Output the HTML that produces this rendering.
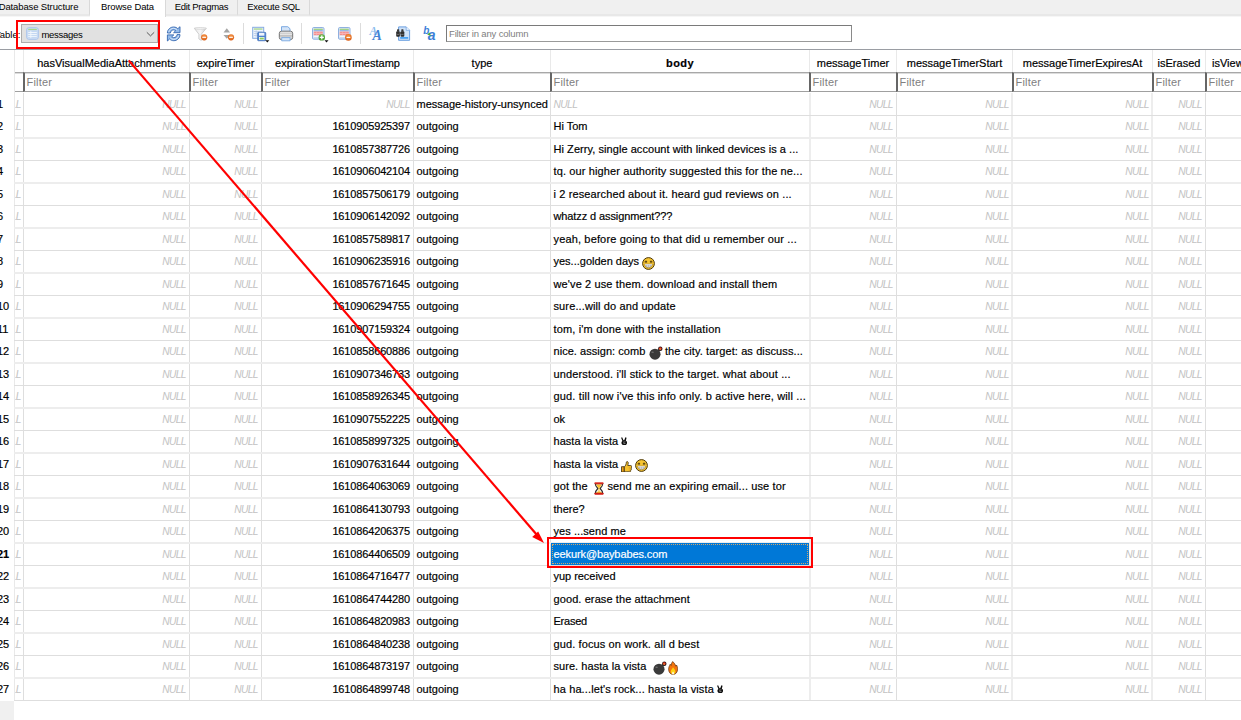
<!DOCTYPE html><html><head><meta charset="utf-8"><title>DB Browser - Browse Data</title><style>

html,body{margin:0;padding:0}
body{width:1241px;height:720px;overflow:hidden;background:#fff;position:relative;font-family:"Liberation Sans","DejaVu Sans",sans-serif;font-size:11px;color:#000;}
div,span{box-sizing:border-box}
.abs{position:absolute}
.tabbar{position:absolute;left:0;top:0;width:1241px;height:16px;background:#f0f0f0;border-bottom:2px solid #e8e8e8;box-shadow:0 1px 0 #f6f6f6}
.tab{position:absolute;top:0;height:16px;line-height:14px;font-size:9.5px;letter-spacing:-0.3px;text-align:center;border-right:1px solid #d9d9d9;border-bottom:2px solid #e8e8e8;background:#f0f0f0;white-space:nowrap;overflow:hidden}
.tab.sel{background:#fff;border-bottom:0;height:17px}
.vl{position:absolute;width:1px;background:#dedede}
.hl{position:absolute;height:1px;background:#dedede}
.hdr{position:absolute;top:50px;height:22px;line-height:26px;text-align:center;white-space:nowrap;overflow:hidden}
.flt{position:absolute;top:72px;height:20px;border-top:1px solid #a8a8a8;border-bottom:1px solid #a0a0a0;border-left:2px solid #666;color:#808080;line-height:19px;padding-left:1.500px;letter-spacing:0.200px;box-shadow:inset 0 1px 0 #dcdcdc;white-space:nowrap;overflow:hidden;background:#fff}
.c{position:absolute;white-space:nowrap;overflow:hidden;height:22px;line-height:22px;-webkit-text-stroke:0.18px currentColor}
.hdr,.rh{-webkit-text-stroke:0.18px currentColor}
.null{-webkit-text-stroke:0 transparent}
.r{text-align:right;padding-right:3px}
.l{text-align:left;padding-left:2.5px}
.num{letter-spacing:-0.15px}
.null{color:#c2c2c2;font-style:italic;font-size:10.2px;letter-spacing:-0.55px}
.rh{position:absolute;left:-3px;width:17px;text-align:left;white-space:nowrap;height:22px;line-height:22px;overflow:hidden}
.tb{font-size:9.5px;letter-spacing:-0.3px}
.em{display:inline-block;vertical-align:baseline}
.vic{font-family:"DejaVu Sans",sans-serif;font-size:10px;margin-left:3px;line-height:1;font-weight:bold}

</style></head><body>
<div class="tabbar"></div>
<div class="tab" style="left:-12px;width:102px;letter-spacing:-0.12px">Database Structure</div>
<div class="tab sel" style="left:90px;width:76px;letter-spacing:-0.12px">Browse Data</div>
<div class="tab" style="left:166px;width:72px;letter-spacing:-0.3px">Edit Pragmas</div>
<div class="tab" style="left:238px;width:72px;letter-spacing:-0.3px">Execute SQL</div>
<div class="abs tb" style="left:-11.2px;top:28px;width:31.5px;height:14px;line-height:14px;white-space:nowrap;text-align:right;letter-spacing:0">Table:</div>
<div class="abs" style="left:21px;top:24px;width:137px;height:19px;background:#e1e1e1;border:1px solid #adadad"></div>
<svg class="abs" style="left:26px;top:27px" width="13" height="13" viewBox="0 0 13 13"><rect x="0.700" y="0.700" width="11.600" height="11.600" rx="2" fill="#cfdff5" stroke="#a9c4ec" stroke-width="1"/><rect x="2.200" y="1.800" width="8.600" height="1.300" fill="#a6d68a"/><rect x="2.200" y="3.800" width="8.600" height="7" fill="#c3d7f2"/><path d="M2.200 5.500h8.600M2.200 7.500h8.600M2.200 9.400h8.600M4.800 3.800v7" stroke="#f4f8fd" stroke-width="0.900"/></svg>
<div class="abs tb" style="left:41.5px;top:28px;height:14px;line-height:14px">messages</div>
<svg class="abs" style="left:146px;top:31px" width="9" height="6" viewBox="0 0 9 6"><path d="M0.800 1.300l3.700 3.600 3.700-3.600" fill="none" stroke="#5a5a5a" stroke-width="1"/></svg>
<svg width="0" height="0" style="position:absolute"><defs><radialGradient id="gor" cx="0.5" cy="0.35" r="0.7"><stop offset="0" stop-color="#f79a4c"/><stop offset="1" stop-color="#d9580f"/></radialGradient><radialGradient id="ggr" cx="0.5" cy="0.35" r="0.7"><stop offset="0" stop-color="#7cc65e"/><stop offset="1" stop-color="#3f9628"/></radialGradient><linearGradient id="gpr" x1="0" y1="0" x2="0" y2="1"><stop offset="0" stop-color="#f4f4f4"/><stop offset="0.45" stop-color="#b9b9b9"/><stop offset="1" stop-color="#ececec"/></linearGradient><linearGradient id="gfn" x1="0" y1="0" x2="1" y2="0"><stop offset="0" stop-color="#e9e9e9"/><stop offset="0.5" stop-color="#f6f6f6"/><stop offset="1" stop-color="#cfcfcf"/></linearGradient></defs></svg>
<svg class="abs" style="left:166px;top:26px" width="16" height="16" viewBox="0 0 16 16"><path d="M1.400 7C1.400 3.400 4.400 1 7.600 1 9.400 1 10.800 1.700 11.800 2.700L14 0.700V6.700H7.600L9.700 4.700C9.100 4.200 8.500 3.900 7.600 3.900 5.800 3.900 4.600 5.200 4.400 7Z" fill="#94bbea" stroke="#3568b0" stroke-width="0.900" stroke-linejoin="round"/><path d="M14 8.600C14 12.200 11 14.700 7.800 14.700 6 14.700 4.600 14 3.600 13L1.400 15V8.900H7.800L5.700 10.900C6.300 11.400 6.900 11.700 7.800 11.700 9.600 11.700 10.800 10.400 11 8.600Z" fill="#94bbea" stroke="#3568b0" stroke-width="0.900" stroke-linejoin="round"/><path d="M2.700 6.200C3.100 3.800 5.200 2.300 7.600 2.300 9 2.300 10.200 2.900 11 3.700M12.700 9.400C12.300 11.800 10.200 13.400 7.800 13.400 6.400 13.400 5.200 12.800 4.400 12" fill="none" stroke="#e2eefb" stroke-width="0.800"/></svg>
<svg class="abs" style="left:193px;top:26px" width="16" height="16" viewBox="0 0 16 16"><path d="M1.300 2.300h12L8.300 8.200v6.200L5.900 13V8.200z" fill="url(#gfn)" stroke="#bdbdbd" stroke-width="0.700"/><ellipse cx="7.300" cy="2.400" rx="5.900" ry="0.900" fill="#f4f4f4" stroke="#c4c4c4" stroke-width="0.500"/><circle cx="11.2" cy="11.3" r="3.1" fill="url(#gor)"/><rect x="9.299999999999999" y="10.75" width="3.8" height="1.1" fill="#fff"/></svg>
<svg class="abs" style="left:222px;top:26px" width="14" height="16" viewBox="0 0 14 16"><path d="M4.800 2.300L8.100 6.600H1.500z" fill="#a4a4a4"/><path d="M4.800 12.700L8.100 9H1.500z" fill="#a4a4a4"/><circle cx="9.0" cy="11.3" r="3.1" fill="url(#gor)"/><rect x="7.1" y="10.75" width="3.8" height="1.1" fill="#fff"/></svg>
<svg class="abs" style="left:251px;top:26px" width="19" height="17" viewBox="0 0 19 17"><rect x="1.700" y="1.300" width="11" height="11" fill="#eef4fc" stroke="#86abe0" stroke-width="1"/><rect x="2.900" y="2.400" width="8.600" height="1.300" fill="#a6d68a"/><path d="M2.900 5.500h8.600M2.900 7.500h8.600M2.900 9.500h8.600M5.200 4.400v7" stroke="#b9cdea" stroke-width="0.800"/><rect x="6.600" y="6.300" width="8.200" height="8.500" rx="0.800" fill="#4f82d0" stroke="#3666b4" stroke-width="0.600"/><rect x="8" y="6.800" width="5.400" height="2.900" fill="#f0f4fb"/><rect x="8" y="11" width="5.400" height="3" fill="#fff"/><rect x="8.600" y="11.600" width="4.200" height="1.900" fill="#8ccc62"/><path d="M14.300 14.300h4l-2 2.300z" fill="#111"/></svg>
<svg class="abs" style="left:278px;top:26px" width="16" height="16" viewBox="0 0 16 16"><path d="M3.500 0.700h6.300l2.200 2V6.500H3.500z" fill="#d3e4f8" stroke="#6fa2de" stroke-width="0.900" stroke-linejoin="round"/><rect x="1.300" y="5.200" width="13.400" height="8.400" rx="2.200" fill="url(#gpr)" stroke="#5c5c5c" stroke-width="0.800"/><path d="M2 8.600h12" stroke="#fff" stroke-width="0.800" opacity="0.800"/><path d="M3.700 11.600h8.400v3.200H3.700z" fill="#d3e4f8" stroke="#6fa2de" stroke-width="0.800"/></svg>
<svg class="abs" style="left:311.7px;top:27px" width="19" height="17" viewBox="0 0 19 17"><rect x="0.500" y="0.500" width="11.500" height="11.700" rx="1.200" fill="#dbe7f7" stroke="#8fb0e0" stroke-width="1"/><rect x="1.700" y="1.700" width="9.100" height="1.200" fill="#9ad07a"/><rect x="1.700" y="3.300" width="9.100" height="0.900" fill="#7ea6e0"/><rect x="1.700" y="4.600" width="9.100" height="3.600" fill="#f58e8e"/><rect x="1.700" y="8.900" width="9.100" height="2.300" fill="#f4f7fc"/><path d="M1.700 6.400h9.100" stroke="#fbd0d0" stroke-width="0.600"/><path d="M1.700 10.900h9.100" stroke="#7ea6e0" stroke-width="0.600"/><path d="M4.500 4.600v3.600M7.800 4.600v3.600" stroke="#f9b8b8" stroke-width="0.500"/><circle cx="9.8" cy="10.4" r="3.2" fill="url(#ggr)"/><rect x="7.800000000000001" y="9.8" width="4" height="1.2" fill="#fff"/><rect x="9.200000000000001" y="8.4" width="1.2" height="4" fill="#fff"/><path d="M12.500 13.200h4l-2 2.400z" fill="#111"/></svg>
<svg class="abs" style="left:338.3px;top:27px" width="16" height="16" viewBox="0 0 16 16"><rect x="0.500" y="0.500" width="11.500" height="11.700" rx="1.200" fill="#dbe7f7" stroke="#8fb0e0" stroke-width="1"/><rect x="1.700" y="1.700" width="9.100" height="1.200" fill="#9ad07a"/><rect x="1.700" y="3.300" width="9.100" height="0.900" fill="#7ea6e0"/><rect x="1.700" y="4.600" width="9.100" height="3.600" fill="#f58e8e"/><rect x="1.700" y="8.900" width="9.100" height="2.300" fill="#f4f7fc"/><path d="M1.700 6.400h9.100" stroke="#fbd0d0" stroke-width="0.600"/><path d="M1.700 10.900h9.100" stroke="#7ea6e0" stroke-width="0.600"/><path d="M4.500 4.600v3.600M7.800 4.600v3.600" stroke="#f9b8b8" stroke-width="0.500"/><circle cx="10.4" cy="10.4" r="3.3" fill="url(#gor)"/><rect x="8.5" y="9.85" width="3.8" height="1.1" fill="#fff"/></svg>
<svg class="abs" style="left:368px;top:26px" width="18" height="16" viewBox="0 0 18 16"><text x="1.600" y="9" font-family="Liberation Serif,serif" font-style="italic" font-weight="bold" font-size="11.500" fill="#8cbcee">A</text><text x="4.600" y="13.700" font-family="Liberation Serif,serif" font-style="italic" font-weight="bold" font-size="14" fill="#4584d6">A</text></svg>
<svg class="abs" style="left:395px;top:26px" width="17" height="16" viewBox="0 0 17 16"><path d="M3.600 0.900h7.600l3.400 3.400V14.300H3.600z" fill="#cfe2f8" stroke="#6a9fe0" stroke-width="1" stroke-linejoin="round"/><path d="M11.200 0.900v3.400h3.400" fill="#f4f9ff" stroke="#6a9fe0" stroke-width="0.700"/><rect x="5.200" y="11" width="8" height="1.800" fill="#4aa2f2"/><rect x="1.200" y="5.200" width="3.700" height="5.600" rx="1" fill="#2e2e2e"/><rect x="5.600" y="5.200" width="3.700" height="5.600" rx="1" fill="#2e2e2e"/><rect x="2" y="3.200" width="2.200" height="2.500" rx="0.600" fill="#3a3a3a"/><rect x="6.300" y="3.200" width="2.200" height="2.500" rx="0.600" fill="#3a3a3a"/><rect x="4.400" y="6" width="1.600" height="2.200" fill="#555"/><path d="M1.800 8.400h2.400M6.200 8.400h2.400" stroke="#9a9a9a" stroke-width="0.600"/></svg>
<svg class="abs" style="left:422px;top:25px" width="17" height="17" viewBox="0 0 17 17"><text x="1.200" y="8.800" font-family="Liberation Sans,sans-serif" font-style="italic" font-weight="bold" font-size="10" fill="#3d7fd8">b</text><text x="5.800" y="15.400" font-family="Liberation Sans,sans-serif" font-style="italic" font-weight="bold" font-size="14" fill="#3d7fd8">a</text><path d="M5.200 9.600l3.800 1.400-1.400-3.400z" fill="#4aa838"/></svg>
<div class="abs" style="left:243px;top:23px;width:1px;height:21px;background:#dcdcdc"></div>
<div class="abs" style="left:301px;top:23px;width:1px;height:21px;background:#dcdcdc"></div>
<div class="abs" style="left:360px;top:23px;width:1px;height:21px;background:#dcdcdc"></div>
<div class="abs" style="left:446px;top:25px;width:406px;height:17px;border:1px solid #7a7a7a;border-bottom-color:#9a9a9a;border-right-color:#8a8a8a;background:#fff;color:#808080;line-height:16px;padding-left:2px;font-size:9.5px;letter-spacing:-0.15px">Filter in any column</div>
<div class="abs" style="left:0;top:49px;width:1241px;height:1px;background:#9a9da3"></div>
<div class="hdr" style="left:24px;width:165px;">hasVisualMediaAttachments</div>
<div class="hdr" style="left:190px;width:71px;">expireTimer</div>
<div class="hdr" style="left:262px;width:151px;">expirationStartTimestamp</div>
<div class="hdr" style="left:414px;width:136px;">type</div>
<div class="hdr" style="left:551px;width:258px;font-weight:bold;letter-spacing:0.4px;">body</div>
<div class="hdr" style="left:810px;width:86px;">messageTimer</div>
<div class="hdr" style="left:897px;width:115px;">messageTimerStart</div>
<div class="hdr" style="left:1013px;width:139px;">messageTimerExpiresAt</div>
<div class="hdr" style="left:1153px;width:52px;">isErased</div>
<div class="hdr" style="left:1206px;width:94px;text-align:left;padding-left:6px;">isViewOnce</div>
<div class="flt" style="left:14px;width:9px;border-left:0;padding:0"></div>
<div class="flt" style="left:23px;width:166px">Filter</div>
<div class="flt" style="left:189px;width:72px">Filter</div>
<div class="flt" style="left:261px;width:152px">Filter</div>
<div class="flt" style="left:413px;width:137px">Filter</div>
<div class="flt" style="left:550px;width:259px">Filter</div>
<div class="flt" style="left:809px;width:87px">Filter</div>
<div class="flt" style="left:896px;width:116px">Filter</div>
<div class="flt" style="left:1012px;width:140px">Filter</div>
<div class="flt" style="left:1152px;width:53px">Filter</div>
<div class="flt" style="left:1205px;width:95px">Filter</div>
<div class="vl" style="left:14px;top:50px;height:650px;background:#e9e9e9"></div>
<div class="vl" style="left:23px;top:50px;height:22px;background:#e9e9e9"></div>
<div class="vl" style="left:23px;top:93px;height:608px"></div>
<div class="vl" style="left:189px;top:50px;height:22px;background:#e9e9e9"></div>
<div class="vl" style="left:189px;top:93px;height:608px"></div>
<div class="vl" style="left:261px;top:50px;height:22px;background:#e9e9e9"></div>
<div class="vl" style="left:261px;top:93px;height:608px"></div>
<div class="vl" style="left:413px;top:50px;height:22px;background:#e9e9e9"></div>
<div class="vl" style="left:413px;top:93px;height:608px"></div>
<div class="vl" style="left:550px;top:50px;height:22px;background:#e9e9e9"></div>
<div class="vl" style="left:550px;top:93px;height:608px"></div>
<div class="vl" style="left:809px;top:50px;height:22px;background:#e9e9e9"></div>
<div class="vl" style="left:809px;top:93px;height:608px;width:2px;background:#ededed"></div>
<div class="vl" style="left:896px;top:50px;height:22px;background:#e9e9e9"></div>
<div class="vl" style="left:896px;top:93px;height:608px"></div>
<div class="vl" style="left:1012px;top:50px;height:22px;background:#e9e9e9"></div>
<div class="vl" style="left:1011px;top:93px;height:608px;width:2px;background:#ededed"></div>
<div class="vl" style="left:1152px;top:50px;height:22px;background:#e9e9e9"></div>
<div class="vl" style="left:1151px;top:93px;height:608px;width:2px;background:#ededed"></div>
<div class="vl" style="left:1205px;top:50px;height:22px;background:#e9e9e9"></div>
<div class="vl" style="left:1205px;top:93px;height:608px"></div>
<div class="hl" style="left:14px;top:115px;width:1227px"></div>
<div class="hl" style="left:14px;top:137px;width:1227px;height:2px;background:#ededed"></div>
<div class="hl" style="left:14px;top:160px;width:1227px"></div>
<div class="hl" style="left:14px;top:182px;width:1227px;height:2px;background:#ededed"></div>
<div class="hl" style="left:14px;top:205px;width:1227px"></div>
<div class="hl" style="left:14px;top:227px;width:1227px;height:2px;background:#ededed"></div>
<div class="hl" style="left:14px;top:250px;width:1227px"></div>
<div class="hl" style="left:14px;top:272px;width:1227px;height:2px;background:#ededed"></div>
<div class="hl" style="left:14px;top:295px;width:1227px"></div>
<div class="hl" style="left:14px;top:317px;width:1227px;height:2px;background:#ededed"></div>
<div class="hl" style="left:14px;top:340px;width:1227px"></div>
<div class="hl" style="left:14px;top:362px;width:1227px;height:2px;background:#ededed"></div>
<div class="hl" style="left:14px;top:385px;width:1227px"></div>
<div class="hl" style="left:14px;top:407px;width:1227px;height:2px;background:#ededed"></div>
<div class="hl" style="left:14px;top:430px;width:1227px"></div>
<div class="hl" style="left:14px;top:452px;width:1227px;height:2px;background:#ededed"></div>
<div class="hl" style="left:14px;top:475px;width:1227px"></div>
<div class="hl" style="left:14px;top:497px;width:1227px;height:2px;background:#ededed"></div>
<div class="hl" style="left:14px;top:520px;width:1227px"></div>
<div class="hl" style="left:14px;top:542px;width:1227px;height:2px;background:#ededed"></div>
<div class="hl" style="left:14px;top:565px;width:1227px"></div>
<div class="hl" style="left:14px;top:587px;width:1227px;height:2px;background:#ededed"></div>
<div class="hl" style="left:14px;top:610px;width:1227px"></div>
<div class="hl" style="left:14px;top:632px;width:1227px;height:2px;background:#ededed"></div>
<div class="hl" style="left:14px;top:655px;width:1227px"></div>
<div class="hl" style="left:14px;top:677px;width:1227px;height:2px;background:#ededed"></div>
<div class="hl" style="left:14px;top:700px;width:1227px"></div>
<div class="abs" style="left:0;top:701px;width:14px;height:19px;background:#f0f0f0"></div>
<div class="rh" style="top:93px;height:22px;line-height:23px;">1</div>
<div class="c null" style="left:15px;top:93px;width:8px;height:22px;line-height:23px;text-align:right;padding-right:2px;direction:rtl"><span style="direction:ltr;unicode-bidi:bidi-override">NULL</span></div>
<div class="c r null" style="left:24px;top:93px;width:165px;height:22px;line-height:23px;">NULL</div>
<div class="c r null" style="left:190px;top:93px;width:71px;height:22px;line-height:23px;">NULL</div>
<div class="c r null" style="left:262px;top:93px;width:151px;height:22px;line-height:23px;">NULL</div>
<div class="c l" style="left:414px;top:93px;width:136px;height:22px;line-height:23px;">message-history-unsynced</div>
<div class="c l null" style="left:551px;top:93px;width:258px;height:22px;line-height:23px;">NULL</div>
<div class="c r null" style="left:810px;top:93px;width:86px;height:22px;line-height:23px;">NULL</div>
<div class="c r null" style="left:897px;top:93px;width:115px;height:22px;line-height:23px;">NULL</div>
<div class="c r null" style="left:1013px;top:93px;width:139px;height:22px;line-height:23px;">NULL</div>
<div class="c r null" style="left:1153px;top:93px;width:52px;height:22px;line-height:23px;">NULL</div>
<div class="rh" style="top:116px;height:21px;line-height:20px;">2</div>
<div class="c null" style="left:15px;top:116px;width:8px;height:21px;line-height:21px;text-align:right;padding-right:2px;direction:rtl"><span style="direction:ltr;unicode-bidi:bidi-override">NULL</span></div>
<div class="c r null" style="left:24px;top:116px;width:165px;height:21px;line-height:21px;">NULL</div>
<div class="c r null" style="left:190px;top:116px;width:71px;height:21px;line-height:21px;">NULL</div>
<div class="c r num" style="left:262px;top:116px;width:151px;height:21px;line-height:20px;">1610905925397</div>
<div class="c l" style="left:414px;top:116px;width:136px;height:21px;line-height:20px;">outgoing</div>
<div class="c l" style="left:551px;top:116px;width:258px;height:21px;line-height:20px;">Hi Tom</div>
<div class="c r null" style="left:810px;top:116px;width:86px;height:21px;line-height:21px;">NULL</div>
<div class="c r null" style="left:897px;top:116px;width:115px;height:21px;line-height:21px;">NULL</div>
<div class="c r null" style="left:1013px;top:116px;width:139px;height:21px;line-height:21px;">NULL</div>
<div class="c r null" style="left:1153px;top:116px;width:52px;height:21px;line-height:21px;">NULL</div>
<div class="rh" style="top:138px;height:22px;line-height:23px;">3</div>
<div class="c null" style="left:15px;top:138px;width:8px;height:22px;line-height:23px;text-align:right;padding-right:2px;direction:rtl"><span style="direction:ltr;unicode-bidi:bidi-override">NULL</span></div>
<div class="c r null" style="left:24px;top:138px;width:165px;height:22px;line-height:23px;">NULL</div>
<div class="c r null" style="left:190px;top:138px;width:71px;height:22px;line-height:23px;">NULL</div>
<div class="c r num" style="left:262px;top:138px;width:151px;height:22px;line-height:23px;">1610857387726</div>
<div class="c l" style="left:414px;top:138px;width:136px;height:22px;line-height:23px;">outgoing</div>
<div class="c l" style="left:551px;top:138px;width:258px;height:22px;line-height:23px;"><span style="letter-spacing:0.058px">Hi Zerry, single account with linked devices is a ...</span></div>
<div class="c r null" style="left:810px;top:138px;width:86px;height:22px;line-height:23px;">NULL</div>
<div class="c r null" style="left:897px;top:138px;width:115px;height:22px;line-height:23px;">NULL</div>
<div class="c r null" style="left:1013px;top:138px;width:139px;height:22px;line-height:23px;">NULL</div>
<div class="c r null" style="left:1153px;top:138px;width:52px;height:22px;line-height:23px;">NULL</div>
<div class="rh" style="top:161px;height:21px;line-height:20px;">4</div>
<div class="c null" style="left:15px;top:161px;width:8px;height:21px;line-height:21px;text-align:right;padding-right:2px;direction:rtl"><span style="direction:ltr;unicode-bidi:bidi-override">NULL</span></div>
<div class="c r null" style="left:24px;top:161px;width:165px;height:21px;line-height:21px;">NULL</div>
<div class="c r null" style="left:190px;top:161px;width:71px;height:21px;line-height:21px;">NULL</div>
<div class="c r num" style="left:262px;top:161px;width:151px;height:21px;line-height:20px;">1610906042104</div>
<div class="c l" style="left:414px;top:161px;width:136px;height:21px;line-height:20px;">outgoing</div>
<div class="c l" style="left:551px;top:161px;width:258px;height:21px;line-height:20px;"><span style="letter-spacing:0.119px">tq. our higher authority suggested this for the ne...</span></div>
<div class="c r null" style="left:810px;top:161px;width:86px;height:21px;line-height:21px;">NULL</div>
<div class="c r null" style="left:897px;top:161px;width:115px;height:21px;line-height:21px;">NULL</div>
<div class="c r null" style="left:1013px;top:161px;width:139px;height:21px;line-height:21px;">NULL</div>
<div class="c r null" style="left:1153px;top:161px;width:52px;height:21px;line-height:21px;">NULL</div>
<div class="rh" style="top:183px;height:22px;line-height:23px;">5</div>
<div class="c null" style="left:15px;top:183px;width:8px;height:22px;line-height:23px;text-align:right;padding-right:2px;direction:rtl"><span style="direction:ltr;unicode-bidi:bidi-override">NULL</span></div>
<div class="c r null" style="left:24px;top:183px;width:165px;height:22px;line-height:23px;">NULL</div>
<div class="c r null" style="left:190px;top:183px;width:71px;height:22px;line-height:23px;">NULL</div>
<div class="c r num" style="left:262px;top:183px;width:151px;height:22px;line-height:23px;">1610857506179</div>
<div class="c l" style="left:414px;top:183px;width:136px;height:22px;line-height:23px;">outgoing</div>
<div class="c l" style="left:551px;top:183px;width:258px;height:22px;line-height:23px;"><span style="letter-spacing:0.120px">i 2 researched about it. heard gud reviews on ...</span></div>
<div class="c r null" style="left:810px;top:183px;width:86px;height:22px;line-height:23px;">NULL</div>
<div class="c r null" style="left:897px;top:183px;width:115px;height:22px;line-height:23px;">NULL</div>
<div class="c r null" style="left:1013px;top:183px;width:139px;height:22px;line-height:23px;">NULL</div>
<div class="c r null" style="left:1153px;top:183px;width:52px;height:22px;line-height:23px;">NULL</div>
<div class="rh" style="top:206px;height:21px;line-height:20px;">6</div>
<div class="c null" style="left:15px;top:206px;width:8px;height:21px;line-height:21px;text-align:right;padding-right:2px;direction:rtl"><span style="direction:ltr;unicode-bidi:bidi-override">NULL</span></div>
<div class="c r null" style="left:24px;top:206px;width:165px;height:21px;line-height:21px;">NULL</div>
<div class="c r null" style="left:190px;top:206px;width:71px;height:21px;line-height:21px;">NULL</div>
<div class="c r num" style="left:262px;top:206px;width:151px;height:21px;line-height:20px;">1610906142092</div>
<div class="c l" style="left:414px;top:206px;width:136px;height:21px;line-height:20px;">outgoing</div>
<div class="c l" style="left:551px;top:206px;width:258px;height:21px;line-height:20px;"><span style="letter-spacing:-0.105px">whatzz d assignment???</span></div>
<div class="c r null" style="left:810px;top:206px;width:86px;height:21px;line-height:21px;">NULL</div>
<div class="c r null" style="left:897px;top:206px;width:115px;height:21px;line-height:21px;">NULL</div>
<div class="c r null" style="left:1013px;top:206px;width:139px;height:21px;line-height:21px;">NULL</div>
<div class="c r null" style="left:1153px;top:206px;width:52px;height:21px;line-height:21px;">NULL</div>
<div class="rh" style="top:228px;height:22px;line-height:23px;">7</div>
<div class="c null" style="left:15px;top:228px;width:8px;height:22px;line-height:23px;text-align:right;padding-right:2px;direction:rtl"><span style="direction:ltr;unicode-bidi:bidi-override">NULL</span></div>
<div class="c r null" style="left:24px;top:228px;width:165px;height:22px;line-height:23px;">NULL</div>
<div class="c r null" style="left:190px;top:228px;width:71px;height:22px;line-height:23px;">NULL</div>
<div class="c r num" style="left:262px;top:228px;width:151px;height:22px;line-height:23px;">1610857589817</div>
<div class="c l" style="left:414px;top:228px;width:136px;height:22px;line-height:23px;">outgoing</div>
<div class="c l" style="left:551px;top:228px;width:258px;height:22px;line-height:23px;"><span style="letter-spacing:0.151px">yeah, before going to that did u remember our ...</span></div>
<div class="c r null" style="left:810px;top:228px;width:86px;height:22px;line-height:23px;">NULL</div>
<div class="c r null" style="left:897px;top:228px;width:115px;height:22px;line-height:23px;">NULL</div>
<div class="c r null" style="left:1013px;top:228px;width:139px;height:22px;line-height:23px;">NULL</div>
<div class="c r null" style="left:1153px;top:228px;width:52px;height:22px;line-height:23px;">NULL</div>
<div class="rh" style="top:251px;height:21px;line-height:20px;">8</div>
<div class="c null" style="left:15px;top:251px;width:8px;height:21px;line-height:21px;text-align:right;padding-right:2px;direction:rtl"><span style="direction:ltr;unicode-bidi:bidi-override">NULL</span></div>
<div class="c r null" style="left:24px;top:251px;width:165px;height:21px;line-height:21px;">NULL</div>
<div class="c r null" style="left:190px;top:251px;width:71px;height:21px;line-height:21px;">NULL</div>
<div class="c r num" style="left:262px;top:251px;width:151px;height:21px;line-height:20px;">1610906235916</div>
<div class="c l" style="left:414px;top:251px;width:136px;height:21px;line-height:20px;">outgoing</div>
<div class="c l" style="left:551px;top:251px;width:258px;height:21px;line-height:20px;">yes...golden days<svg class="em" style="width:13px;height:13px;margin:0 0 -5px 3px" viewBox="0 0 13 13"><circle cx="6.500" cy="6.500" r="5.900" fill="#f7c531" stroke="#4a3608" stroke-width="1"/><path d="M2.700 4.900h2.400M7.900 4.900h2.400" stroke="#3a2808" stroke-width="1.100"/><path d="M2.900 4.200q1.100-.8 2.100 0M8 4.200q1.100-.8 2.100 0" stroke="#6a4c10" stroke-width="0.500" fill="none"/><path d="M2.600 7h7.800c0 2.300-1.700 3.700-3.900 3.700S2.600 9.300 2.600 7z" fill="#d4d4d4" stroke="#8a6a1a" stroke-width="0.500"/><path d="M4.500 7v3M6.500 7v3.600M8.500 7v3" stroke="#a8a8a8" stroke-width="0.500"/><path d="M2.800 7.400h7.400" stroke="#f4f4f4" stroke-width="0.600"/></svg></div>
<div class="c r null" style="left:810px;top:251px;width:86px;height:21px;line-height:21px;">NULL</div>
<div class="c r null" style="left:897px;top:251px;width:115px;height:21px;line-height:21px;">NULL</div>
<div class="c r null" style="left:1013px;top:251px;width:139px;height:21px;line-height:21px;">NULL</div>
<div class="c r null" style="left:1153px;top:251px;width:52px;height:21px;line-height:21px;">NULL</div>
<div class="rh" style="top:273px;height:22px;line-height:23px;">9</div>
<div class="c null" style="left:15px;top:273px;width:8px;height:22px;line-height:23px;text-align:right;padding-right:2px;direction:rtl"><span style="direction:ltr;unicode-bidi:bidi-override">NULL</span></div>
<div class="c r null" style="left:24px;top:273px;width:165px;height:22px;line-height:23px;">NULL</div>
<div class="c r null" style="left:190px;top:273px;width:71px;height:22px;line-height:23px;">NULL</div>
<div class="c r num" style="left:262px;top:273px;width:151px;height:22px;line-height:23px;">1610857671645</div>
<div class="c l" style="left:414px;top:273px;width:136px;height:22px;line-height:23px;">outgoing</div>
<div class="c l" style="left:551px;top:273px;width:258px;height:22px;line-height:23px;"><span style="letter-spacing:0.119px">we've 2 use them. download and install them</span></div>
<div class="c r null" style="left:810px;top:273px;width:86px;height:22px;line-height:23px;">NULL</div>
<div class="c r null" style="left:897px;top:273px;width:115px;height:22px;line-height:23px;">NULL</div>
<div class="c r null" style="left:1013px;top:273px;width:139px;height:22px;line-height:23px;">NULL</div>
<div class="c r null" style="left:1153px;top:273px;width:52px;height:22px;line-height:23px;">NULL</div>
<div class="rh" style="top:296px;height:21px;line-height:20px;">10</div>
<div class="c null" style="left:15px;top:296px;width:8px;height:21px;line-height:21px;text-align:right;padding-right:2px;direction:rtl"><span style="direction:ltr;unicode-bidi:bidi-override">NULL</span></div>
<div class="c r null" style="left:24px;top:296px;width:165px;height:21px;line-height:21px;">NULL</div>
<div class="c r null" style="left:190px;top:296px;width:71px;height:21px;line-height:21px;">NULL</div>
<div class="c r num" style="left:262px;top:296px;width:151px;height:21px;line-height:20px;">1610906294755</div>
<div class="c l" style="left:414px;top:296px;width:136px;height:21px;line-height:20px;">outgoing</div>
<div class="c l" style="left:551px;top:296px;width:258px;height:21px;line-height:20px;"><span style="letter-spacing:0.120px">sure...will do and update</span></div>
<div class="c r null" style="left:810px;top:296px;width:86px;height:21px;line-height:21px;">NULL</div>
<div class="c r null" style="left:897px;top:296px;width:115px;height:21px;line-height:21px;">NULL</div>
<div class="c r null" style="left:1013px;top:296px;width:139px;height:21px;line-height:21px;">NULL</div>
<div class="c r null" style="left:1153px;top:296px;width:52px;height:21px;line-height:21px;">NULL</div>
<div class="rh" style="top:318px;height:22px;line-height:23px;">11</div>
<div class="c null" style="left:15px;top:318px;width:8px;height:22px;line-height:23px;text-align:right;padding-right:2px;direction:rtl"><span style="direction:ltr;unicode-bidi:bidi-override">NULL</span></div>
<div class="c r null" style="left:24px;top:318px;width:165px;height:22px;line-height:23px;">NULL</div>
<div class="c r null" style="left:190px;top:318px;width:71px;height:22px;line-height:23px;">NULL</div>
<div class="c r num" style="left:262px;top:318px;width:151px;height:22px;line-height:23px;">1610907159324</div>
<div class="c l" style="left:414px;top:318px;width:136px;height:22px;line-height:23px;">outgoing</div>
<div class="c l" style="left:551px;top:318px;width:258px;height:22px;line-height:23px;"><span style="letter-spacing:0.157px">tom, i'm done with the installation</span></div>
<div class="c r null" style="left:810px;top:318px;width:86px;height:22px;line-height:23px;">NULL</div>
<div class="c r null" style="left:897px;top:318px;width:115px;height:22px;line-height:23px;">NULL</div>
<div class="c r null" style="left:1013px;top:318px;width:139px;height:22px;line-height:23px;">NULL</div>
<div class="c r null" style="left:1153px;top:318px;width:52px;height:22px;line-height:23px;">NULL</div>
<div class="rh" style="top:341px;height:21px;line-height:20px;">12</div>
<div class="c null" style="left:15px;top:341px;width:8px;height:21px;line-height:21px;text-align:right;padding-right:2px;direction:rtl"><span style="direction:ltr;unicode-bidi:bidi-override">NULL</span></div>
<div class="c r null" style="left:24px;top:341px;width:165px;height:21px;line-height:21px;">NULL</div>
<div class="c r null" style="left:190px;top:341px;width:71px;height:21px;line-height:21px;">NULL</div>
<div class="c r num" style="left:262px;top:341px;width:151px;height:21px;line-height:20px;">1610858660886</div>
<div class="c l" style="left:414px;top:341px;width:136px;height:21px;line-height:20px;">outgoing</div>
<div class="c l" style="left:551px;top:341px;width:258px;height:21px;line-height:20px;"><span style="letter-spacing:0.044px">nice. assign: comb</span><svg class="em" style="width:14px;height:14px;margin:0 0 -5.300px 3.5px" viewBox="0 0 14 14"><path d="M9.200 4.800l1.600-1.600" stroke="#4a4a4a" stroke-width="2"/><circle cx="6" cy="8.200" r="5.550" fill="#3a3a3a"/><circle cx="11.300" cy="2.700" r="2.200" fill="#2a1a1a"/><circle cx="11.300" cy="2.600" r="1.400" fill="#d8261a"/><circle cx="11.100" cy="3.100" r="0.800" fill="#ff9a3c"/><ellipse cx="3.600" cy="6.200" rx="1.300" ry="0.700" fill="#6e6e6e"/></svg><span style="margin-left:2px"><span style="letter-spacing:0.103px">the city. target: as discuss...</span></span></div>
<div class="c r null" style="left:810px;top:341px;width:86px;height:21px;line-height:21px;">NULL</div>
<div class="c r null" style="left:897px;top:341px;width:115px;height:21px;line-height:21px;">NULL</div>
<div class="c r null" style="left:1013px;top:341px;width:139px;height:21px;line-height:21px;">NULL</div>
<div class="c r null" style="left:1153px;top:341px;width:52px;height:21px;line-height:21px;">NULL</div>
<div class="rh" style="top:363px;height:22px;line-height:23px;">13</div>
<div class="c null" style="left:15px;top:363px;width:8px;height:22px;line-height:23px;text-align:right;padding-right:2px;direction:rtl"><span style="direction:ltr;unicode-bidi:bidi-override">NULL</span></div>
<div class="c r null" style="left:24px;top:363px;width:165px;height:22px;line-height:23px;">NULL</div>
<div class="c r null" style="left:190px;top:363px;width:71px;height:22px;line-height:23px;">NULL</div>
<div class="c r num" style="left:262px;top:363px;width:151px;height:22px;line-height:23px;">1610907346733</div>
<div class="c l" style="left:414px;top:363px;width:136px;height:22px;line-height:23px;">outgoing</div>
<div class="c l" style="left:551px;top:363px;width:258px;height:22px;line-height:23px;"><span style="letter-spacing:0.148px">understood. i'll stick to the target. what about ...</span></div>
<div class="c r null" style="left:810px;top:363px;width:86px;height:22px;line-height:23px;">NULL</div>
<div class="c r null" style="left:897px;top:363px;width:115px;height:22px;line-height:23px;">NULL</div>
<div class="c r null" style="left:1013px;top:363px;width:139px;height:22px;line-height:23px;">NULL</div>
<div class="c r null" style="left:1153px;top:363px;width:52px;height:22px;line-height:23px;">NULL</div>
<div class="rh" style="top:386px;height:21px;line-height:20px;">14</div>
<div class="c null" style="left:15px;top:386px;width:8px;height:21px;line-height:21px;text-align:right;padding-right:2px;direction:rtl"><span style="direction:ltr;unicode-bidi:bidi-override">NULL</span></div>
<div class="c r null" style="left:24px;top:386px;width:165px;height:21px;line-height:21px;">NULL</div>
<div class="c r null" style="left:190px;top:386px;width:71px;height:21px;line-height:21px;">NULL</div>
<div class="c r num" style="left:262px;top:386px;width:151px;height:21px;line-height:20px;">1610858926345</div>
<div class="c l" style="left:414px;top:386px;width:136px;height:21px;line-height:20px;">outgoing</div>
<div class="c l" style="left:551px;top:386px;width:258px;height:21px;line-height:20px;"><span style="letter-spacing:0.155px">gud. till now i've this info only. b active here, will ...</span></div>
<div class="c r null" style="left:810px;top:386px;width:86px;height:21px;line-height:21px;">NULL</div>
<div class="c r null" style="left:897px;top:386px;width:115px;height:21px;line-height:21px;">NULL</div>
<div class="c r null" style="left:1013px;top:386px;width:139px;height:21px;line-height:21px;">NULL</div>
<div class="c r null" style="left:1153px;top:386px;width:52px;height:21px;line-height:21px;">NULL</div>
<div class="rh" style="top:408px;height:22px;line-height:23px;">15</div>
<div class="c null" style="left:15px;top:408px;width:8px;height:22px;line-height:23px;text-align:right;padding-right:2px;direction:rtl"><span style="direction:ltr;unicode-bidi:bidi-override">NULL</span></div>
<div class="c r null" style="left:24px;top:408px;width:165px;height:22px;line-height:23px;">NULL</div>
<div class="c r null" style="left:190px;top:408px;width:71px;height:22px;line-height:23px;">NULL</div>
<div class="c r num" style="left:262px;top:408px;width:151px;height:22px;line-height:23px;">1610907552225</div>
<div class="c l" style="left:414px;top:408px;width:136px;height:22px;line-height:23px;">outgoing</div>
<div class="c l" style="left:551px;top:408px;width:258px;height:22px;line-height:23px;">ok</div>
<div class="c r null" style="left:810px;top:408px;width:86px;height:22px;line-height:23px;">NULL</div>
<div class="c r null" style="left:897px;top:408px;width:115px;height:22px;line-height:23px;">NULL</div>
<div class="c r null" style="left:1013px;top:408px;width:139px;height:22px;line-height:23px;">NULL</div>
<div class="c r null" style="left:1153px;top:408px;width:52px;height:22px;line-height:23px;">NULL</div>
<div class="rh" style="top:431px;height:21px;line-height:20px;">16</div>
<div class="c null" style="left:15px;top:431px;width:8px;height:21px;line-height:21px;text-align:right;padding-right:2px;direction:rtl"><span style="direction:ltr;unicode-bidi:bidi-override">NULL</span></div>
<div class="c r null" style="left:24px;top:431px;width:165px;height:21px;line-height:21px;">NULL</div>
<div class="c r null" style="left:190px;top:431px;width:71px;height:21px;line-height:21px;">NULL</div>
<div class="c r num" style="left:262px;top:431px;width:151px;height:21px;line-height:20px;">1610858997325</div>
<div class="c l" style="left:414px;top:431px;width:136px;height:21px;line-height:20px;">outgoing</div>
<div class="c l" style="left:551px;top:431px;width:258px;height:21px;line-height:20px;"><span style="letter-spacing:0.036px">hasta la vista</span><svg class="em" style="width:6.500px;height:8.500px;margin:0 0 0 3px" viewBox="0 0 7 9"><path d="M1.200 0.300L2.700 3.500 3.500 3.400 4.700 0.200 6 0.600 5.200 4C6.500 4.400 6.700 6 6.300 7.200 5.900 8.400 4.700 8.900 3.400 8.900 2 8.900 0.800 8.100 0.500 6.700 0.300 5.500 0.700 4.600 1.500 4.200L0.100 0.800Z" fill="#0c0c0c"/><path d="M2.200 5.600l2.600-.5M2.600 7.100l2.200-.2" stroke="#fff" stroke-width="0.500"/></svg></div>
<div class="c r null" style="left:810px;top:431px;width:86px;height:21px;line-height:21px;">NULL</div>
<div class="c r null" style="left:897px;top:431px;width:115px;height:21px;line-height:21px;">NULL</div>
<div class="c r null" style="left:1013px;top:431px;width:139px;height:21px;line-height:21px;">NULL</div>
<div class="c r null" style="left:1153px;top:431px;width:52px;height:21px;line-height:21px;">NULL</div>
<div class="rh" style="top:453px;height:22px;line-height:23px;">17</div>
<div class="c null" style="left:15px;top:453px;width:8px;height:22px;line-height:23px;text-align:right;padding-right:2px;direction:rtl"><span style="direction:ltr;unicode-bidi:bidi-override">NULL</span></div>
<div class="c r null" style="left:24px;top:453px;width:165px;height:22px;line-height:23px;">NULL</div>
<div class="c r null" style="left:190px;top:453px;width:71px;height:22px;line-height:23px;">NULL</div>
<div class="c r num" style="left:262px;top:453px;width:151px;height:22px;line-height:23px;">1610907631644</div>
<div class="c l" style="left:414px;top:453px;width:136px;height:22px;line-height:23px;">outgoing</div>
<div class="c l" style="left:551px;top:453px;width:258px;height:22px;line-height:23px;"><span style="letter-spacing:0.036px">hasta la vista</span><svg class="em" style="width:11.300px;height:11.500px;margin:0 0 -4px 2.900px" viewBox="0 0 12 11.500" preserveAspectRatio="none"><path d="M0.500 5.700h3v5.300h-3z" fill="#e9a21a" stroke="#33240a" stroke-width="0.800" stroke-linejoin="round"/><path d="M3.500 5.900C4.600 5.100 5.600 3.400 5.700 1.200 5.800 0.300 7.600 0.300 7.700 1.700 7.700 2.900 7.400 3.800 7.200 4.500H10.300C11.500 4.500 11.600 5.900 10.700 6.100 11.500 6.400 11.400 7.600 10.600 7.800 11.200 8.200 11 9.200 10.200 9.400 10.600 10 10.200 10.800 9.400 10.800H5.600C4.800 10.800 4.200 10.600 3.500 10.300Z" fill="#f7c22e" stroke="#33240a" stroke-width="0.800" stroke-linejoin="round"/><path d="M8.200 6.200h2.300M8.200 7.800h2.200M8.200 9.400h1.800" stroke="#c88a14" stroke-width="0.500"/></svg><svg class="em" style="width:13px;height:13px;margin:0 0 -4px 2.800px" viewBox="0 0 13 13"><circle cx="6.500" cy="6.500" r="5.900" fill="#f7c531" stroke="#4a3608" stroke-width="1"/><path d="M2.700 4.900h2.400M7.900 4.900h2.400" stroke="#3a2808" stroke-width="1.100"/><path d="M2.900 4.200q1.100-.8 2.100 0M8 4.200q1.100-.8 2.100 0" stroke="#6a4c10" stroke-width="0.500" fill="none"/><path d="M2.600 7h7.800c0 2.300-1.700 3.700-3.900 3.700S2.600 9.300 2.600 7z" fill="#d4d4d4" stroke="#8a6a1a" stroke-width="0.500"/><path d="M4.500 7v3M6.500 7v3.600M8.500 7v3" stroke="#a8a8a8" stroke-width="0.500"/><path d="M2.800 7.400h7.400" stroke="#f4f4f4" stroke-width="0.600"/></svg></div>
<div class="c r null" style="left:810px;top:453px;width:86px;height:22px;line-height:23px;">NULL</div>
<div class="c r null" style="left:897px;top:453px;width:115px;height:22px;line-height:23px;">NULL</div>
<div class="c r null" style="left:1013px;top:453px;width:139px;height:22px;line-height:23px;">NULL</div>
<div class="c r null" style="left:1153px;top:453px;width:52px;height:22px;line-height:23px;">NULL</div>
<div class="rh" style="top:476px;height:21px;line-height:20px;">18</div>
<div class="c null" style="left:15px;top:476px;width:8px;height:21px;line-height:21px;text-align:right;padding-right:2px;direction:rtl"><span style="direction:ltr;unicode-bidi:bidi-override">NULL</span></div>
<div class="c r null" style="left:24px;top:476px;width:165px;height:21px;line-height:21px;">NULL</div>
<div class="c r null" style="left:190px;top:476px;width:71px;height:21px;line-height:21px;">NULL</div>
<div class="c r num" style="left:262px;top:476px;width:151px;height:21px;line-height:20px;">1610864063069</div>
<div class="c l" style="left:414px;top:476px;width:136px;height:21px;line-height:20px;">outgoing</div>
<div class="c l" style="left:551px;top:476px;width:258px;height:21px;line-height:20px;"><span style="letter-spacing:0.071px">got the</span><svg class="em" style="width:10px;height:13px;margin:0 0 -5px 6.800px" viewBox="0 0 10 13"><path d="M1.300 1.600h7.400c0 2.700-1.500 3.700-2.700 4.900 1.200 1.200 2.700 2.200 2.700 4.900H1.300c0-2.700 1.500-3.700 2.700-4.900C2.800 5.300 1.300 4.300 1.300 1.600z" fill="#fff" stroke="#2e2e2e" stroke-width="1.200"/><path d="M2.400 2.400h5.200c-.3 1.800-1.400 2.500-2.100 3.500v3.200h-1V5.900C3.800 4.900 2.700 4.200 2.400 2.400z" fill="#f9c22e"/><path d="M2.200 11c.3-1.100 1.500-1.600 2.800-2.100 1.300.5 2.500 1 2.800 2.100z" fill="#f9c22e"/><rect x="0.600" y="0.300" width="8.800" height="1.900" rx="0.400" fill="#d41c14"/><rect x="0.600" y="10.800" width="8.800" height="1.900" rx="0.400" fill="#d41c14"/><path d="M0.900 0.700h8.200" stroke="#f08a80" stroke-width="0.500"/></svg><span style="margin-left:3px"><span style="letter-spacing:0.111px">send me an expiring email... use tor</span></span></div>
<div class="c r null" style="left:810px;top:476px;width:86px;height:21px;line-height:21px;">NULL</div>
<div class="c r null" style="left:897px;top:476px;width:115px;height:21px;line-height:21px;">NULL</div>
<div class="c r null" style="left:1013px;top:476px;width:139px;height:21px;line-height:21px;">NULL</div>
<div class="c r null" style="left:1153px;top:476px;width:52px;height:21px;line-height:21px;">NULL</div>
<div class="rh" style="top:498px;height:22px;line-height:23px;">19</div>
<div class="c null" style="left:15px;top:498px;width:8px;height:22px;line-height:23px;text-align:right;padding-right:2px;direction:rtl"><span style="direction:ltr;unicode-bidi:bidi-override">NULL</span></div>
<div class="c r null" style="left:24px;top:498px;width:165px;height:22px;line-height:23px;">NULL</div>
<div class="c r null" style="left:190px;top:498px;width:71px;height:22px;line-height:23px;">NULL</div>
<div class="c r num" style="left:262px;top:498px;width:151px;height:22px;line-height:23px;">1610864130793</div>
<div class="c l" style="left:414px;top:498px;width:136px;height:22px;line-height:23px;">outgoing</div>
<div class="c l" style="left:551px;top:498px;width:258px;height:22px;line-height:23px;">there?</div>
<div class="c r null" style="left:810px;top:498px;width:86px;height:22px;line-height:23px;">NULL</div>
<div class="c r null" style="left:897px;top:498px;width:115px;height:22px;line-height:23px;">NULL</div>
<div class="c r null" style="left:1013px;top:498px;width:139px;height:22px;line-height:23px;">NULL</div>
<div class="c r null" style="left:1153px;top:498px;width:52px;height:22px;line-height:23px;">NULL</div>
<div class="rh" style="top:521px;height:21px;line-height:20px;">20</div>
<div class="c null" style="left:15px;top:521px;width:8px;height:21px;line-height:21px;text-align:right;padding-right:2px;direction:rtl"><span style="direction:ltr;unicode-bidi:bidi-override">NULL</span></div>
<div class="c r null" style="left:24px;top:521px;width:165px;height:21px;line-height:21px;">NULL</div>
<div class="c r null" style="left:190px;top:521px;width:71px;height:21px;line-height:21px;">NULL</div>
<div class="c r num" style="left:262px;top:521px;width:151px;height:21px;line-height:20px;">1610864206375</div>
<div class="c l" style="left:414px;top:521px;width:136px;height:21px;line-height:20px;">outgoing</div>
<div class="c l" style="left:551px;top:521px;width:258px;height:21px;line-height:20px;"><span style="letter-spacing:0.064px">yes ...send me</span></div>
<div class="c r null" style="left:810px;top:521px;width:86px;height:21px;line-height:21px;">NULL</div>
<div class="c r null" style="left:897px;top:521px;width:115px;height:21px;line-height:21px;">NULL</div>
<div class="c r null" style="left:1013px;top:521px;width:139px;height:21px;line-height:21px;">NULL</div>
<div class="c r null" style="left:1153px;top:521px;width:52px;height:21px;line-height:21px;">NULL</div>
<div class="rh" style="top:543px;height:22px;line-height:23px;font-weight:bold;">21</div>
<div class="c null" style="left:15px;top:543px;width:8px;height:22px;line-height:23px;text-align:right;padding-right:2px;direction:rtl"><span style="direction:ltr;unicode-bidi:bidi-override">NULL</span></div>
<div class="c r null" style="left:24px;top:543px;width:165px;height:22px;line-height:23px;">NULL</div>
<div class="c r null" style="left:190px;top:543px;width:71px;height:22px;line-height:23px;">NULL</div>
<div class="c r num" style="left:262px;top:543px;width:151px;height:22px;line-height:23px;">1610864406509</div>
<div class="c l" style="left:414px;top:543px;width:136px;height:22px;line-height:23px;">outgoing</div>
<div class="c l" style="left:551px;top:543px;width:258px;height:22px;line-height:23px;background:#0078d7;color:#fff;outline:1px dotted rgba(245,175,90,0.85);outline-offset:-2px"><span style="letter-spacing:-0.105px">eekurk@baybabes.com</span></div>
<div class="c r null" style="left:810px;top:543px;width:86px;height:22px;line-height:23px;">NULL</div>
<div class="c r null" style="left:897px;top:543px;width:115px;height:22px;line-height:23px;">NULL</div>
<div class="c r null" style="left:1013px;top:543px;width:139px;height:22px;line-height:23px;">NULL</div>
<div class="c r null" style="left:1153px;top:543px;width:52px;height:22px;line-height:23px;">NULL</div>
<div class="rh" style="top:566px;height:21px;line-height:20px;">22</div>
<div class="c null" style="left:15px;top:566px;width:8px;height:21px;line-height:21px;text-align:right;padding-right:2px;direction:rtl"><span style="direction:ltr;unicode-bidi:bidi-override">NULL</span></div>
<div class="c r null" style="left:24px;top:566px;width:165px;height:21px;line-height:21px;">NULL</div>
<div class="c r null" style="left:190px;top:566px;width:71px;height:21px;line-height:21px;">NULL</div>
<div class="c r num" style="left:262px;top:566px;width:151px;height:21px;line-height:20px;">1610864716477</div>
<div class="c l" style="left:414px;top:566px;width:136px;height:21px;line-height:20px;">outgoing</div>
<div class="c l" style="left:551px;top:566px;width:258px;height:21px;line-height:20px;"><span style="letter-spacing:-0.033px">yup received</span></div>
<div class="c r null" style="left:810px;top:566px;width:86px;height:21px;line-height:21px;">NULL</div>
<div class="c r null" style="left:897px;top:566px;width:115px;height:21px;line-height:21px;">NULL</div>
<div class="c r null" style="left:1013px;top:566px;width:139px;height:21px;line-height:21px;">NULL</div>
<div class="c r null" style="left:1153px;top:566px;width:52px;height:21px;line-height:21px;">NULL</div>
<div class="rh" style="top:588px;height:22px;line-height:23px;">23</div>
<div class="c null" style="left:15px;top:588px;width:8px;height:22px;line-height:23px;text-align:right;padding-right:2px;direction:rtl"><span style="direction:ltr;unicode-bidi:bidi-override">NULL</span></div>
<div class="c r null" style="left:24px;top:588px;width:165px;height:22px;line-height:23px;">NULL</div>
<div class="c r null" style="left:190px;top:588px;width:71px;height:22px;line-height:23px;">NULL</div>
<div class="c r num" style="left:262px;top:588px;width:151px;height:22px;line-height:23px;">1610864744280</div>
<div class="c l" style="left:414px;top:588px;width:136px;height:22px;line-height:23px;">outgoing</div>
<div class="c l" style="left:551px;top:588px;width:258px;height:22px;line-height:23px;"><span style="letter-spacing:0.096px">good. erase the attachment</span></div>
<div class="c r null" style="left:810px;top:588px;width:86px;height:22px;line-height:23px;">NULL</div>
<div class="c r null" style="left:897px;top:588px;width:115px;height:22px;line-height:23px;">NULL</div>
<div class="c r null" style="left:1013px;top:588px;width:139px;height:22px;line-height:23px;">NULL</div>
<div class="c r null" style="left:1153px;top:588px;width:52px;height:22px;line-height:23px;">NULL</div>
<div class="rh" style="top:611px;height:21px;line-height:20px;">24</div>
<div class="c null" style="left:15px;top:611px;width:8px;height:21px;line-height:21px;text-align:right;padding-right:2px;direction:rtl"><span style="direction:ltr;unicode-bidi:bidi-override">NULL</span></div>
<div class="c r null" style="left:24px;top:611px;width:165px;height:21px;line-height:21px;">NULL</div>
<div class="c r null" style="left:190px;top:611px;width:71px;height:21px;line-height:21px;">NULL</div>
<div class="c r num" style="left:262px;top:611px;width:151px;height:21px;line-height:20px;">1610864820983</div>
<div class="c l" style="left:414px;top:611px;width:136px;height:21px;line-height:20px;">outgoing</div>
<div class="c l" style="left:551px;top:611px;width:258px;height:21px;line-height:20px;"><span style="letter-spacing:-0.233px">Erased</span></div>
<div class="c r null" style="left:810px;top:611px;width:86px;height:21px;line-height:21px;">NULL</div>
<div class="c r null" style="left:897px;top:611px;width:115px;height:21px;line-height:21px;">NULL</div>
<div class="c r null" style="left:1013px;top:611px;width:139px;height:21px;line-height:21px;">NULL</div>
<div class="c r null" style="left:1153px;top:611px;width:52px;height:21px;line-height:21px;">NULL</div>
<div class="rh" style="top:633px;height:22px;line-height:23px;">25</div>
<div class="c null" style="left:15px;top:633px;width:8px;height:22px;line-height:23px;text-align:right;padding-right:2px;direction:rtl"><span style="direction:ltr;unicode-bidi:bidi-override">NULL</span></div>
<div class="c r null" style="left:24px;top:633px;width:165px;height:22px;line-height:23px;">NULL</div>
<div class="c r null" style="left:190px;top:633px;width:71px;height:22px;line-height:23px;">NULL</div>
<div class="c r num" style="left:262px;top:633px;width:151px;height:22px;line-height:23px;">1610864840238</div>
<div class="c l" style="left:414px;top:633px;width:136px;height:22px;line-height:23px;">outgoing</div>
<div class="c l" style="left:551px;top:633px;width:258px;height:22px;line-height:23px;"><span style="letter-spacing:0.113px">gud. focus on work. all d best</span></div>
<div class="c r null" style="left:810px;top:633px;width:86px;height:22px;line-height:23px;">NULL</div>
<div class="c r null" style="left:897px;top:633px;width:115px;height:22px;line-height:23px;">NULL</div>
<div class="c r null" style="left:1013px;top:633px;width:139px;height:22px;line-height:23px;">NULL</div>
<div class="c r null" style="left:1153px;top:633px;width:52px;height:22px;line-height:23px;">NULL</div>
<div class="rh" style="top:656px;height:21px;line-height:20px;">26</div>
<div class="c null" style="left:15px;top:656px;width:8px;height:21px;line-height:21px;text-align:right;padding-right:2px;direction:rtl"><span style="direction:ltr;unicode-bidi:bidi-override">NULL</span></div>
<div class="c r null" style="left:24px;top:656px;width:165px;height:21px;line-height:21px;">NULL</div>
<div class="c r null" style="left:190px;top:656px;width:71px;height:21px;line-height:21px;">NULL</div>
<div class="c r num" style="left:262px;top:656px;width:151px;height:21px;line-height:20px;">1610864873197</div>
<div class="c l" style="left:414px;top:656px;width:136px;height:21px;line-height:20px;">outgoing</div>
<div class="c l" style="left:551px;top:656px;width:258px;height:21px;line-height:20px;"><span style="letter-spacing:0.055px">sure. hasta la vista</span><svg class="em" style="width:14px;height:14px;margin:0 0 -5.300px 6.3px" viewBox="0 0 14 14"><path d="M9.200 4.800l1.600-1.600" stroke="#4a4a4a" stroke-width="2"/><circle cx="6" cy="8.200" r="5.550" fill="#3a3a3a"/><circle cx="11.300" cy="2.700" r="2.200" fill="#2a1a1a"/><circle cx="11.300" cy="2.600" r="1.400" fill="#d8261a"/><circle cx="11.100" cy="3.100" r="0.800" fill="#ff9a3c"/><ellipse cx="3.600" cy="6.200" rx="1.300" ry="0.700" fill="#6e6e6e"/></svg><svg class="em" style="width:10.200px;height:14px;margin:0 0 -5.300px 1.300px" viewBox="0 0 11 14" preserveAspectRatio="none"><path d="M5 0.500C6.400 1.600 8 3.400 8.300 5.200 8.700 4.900 9 4.500 9.200 4 10.200 5.600 10.500 7.200 10.300 8.800 10 11.600 8 13.500 5.500 13.500 3 13.500 0.900 11.600 0.700 8.800 0.500 6.400 1.600 4.800 2.400 3.200 2.700 3.800 3 4.200 3.400 4.500 3.500 3 4 1.600 5 0.500Z" fill="#f4740e" stroke="#5a2a06" stroke-width="0.700" stroke-linejoin="round"/><path d="M5.400 6.200C6.400 7.600 8 8.800 8 10.600 8 12.200 6.900 13.200 5.500 13.200 4.100 13.200 3 12.200 3 10.600 3 9 4.600 7.800 5.400 6.200Z" fill="#fcd414"/><path d="M5.500 10.600c.6.700 1.100 1.100 1.100 1.800 0 .6-.5 1-1.100 1s-1.100-.4-1.100-1c0-.7.500-1.200 1.100-1.800z" fill="#fff8dc"/></svg></div>
<div class="c r null" style="left:810px;top:656px;width:86px;height:21px;line-height:21px;">NULL</div>
<div class="c r null" style="left:897px;top:656px;width:115px;height:21px;line-height:21px;">NULL</div>
<div class="c r null" style="left:1013px;top:656px;width:139px;height:21px;line-height:21px;">NULL</div>
<div class="c r null" style="left:1153px;top:656px;width:52px;height:21px;line-height:21px;">NULL</div>
<div class="rh" style="top:678px;height:22px;line-height:23px;">27</div>
<div class="c null" style="left:15px;top:678px;width:8px;height:22px;line-height:23px;text-align:right;padding-right:2px;direction:rtl"><span style="direction:ltr;unicode-bidi:bidi-override">NULL</span></div>
<div class="c r null" style="left:24px;top:678px;width:165px;height:22px;line-height:23px;">NULL</div>
<div class="c r null" style="left:190px;top:678px;width:71px;height:22px;line-height:23px;">NULL</div>
<div class="c r num" style="left:262px;top:678px;width:151px;height:22px;line-height:23px;">1610864899748</div>
<div class="c l" style="left:414px;top:678px;width:136px;height:22px;line-height:23px;">outgoing</div>
<div class="c l" style="left:551px;top:678px;width:258px;height:22px;line-height:23px;"><span style="letter-spacing:0.117px">ha ha...let's rock... hasta la vista</span><svg class="em" style="width:6.500px;height:8.500px;margin:0 0 0 3px" viewBox="0 0 7 9"><path d="M1.200 0.300L2.700 3.500 3.500 3.400 4.700 0.200 6 0.600 5.200 4C6.500 4.400 6.700 6 6.300 7.200 5.900 8.400 4.700 8.900 3.400 8.900 2 8.900 0.800 8.100 0.500 6.700 0.300 5.500 0.700 4.600 1.500 4.200L0.100 0.800Z" fill="#0c0c0c"/><path d="M2.200 5.600l2.600-.5M2.600 7.100l2.200-.2" stroke="#fff" stroke-width="0.500"/></svg></div>
<div class="c r null" style="left:810px;top:678px;width:86px;height:22px;line-height:23px;">NULL</div>
<div class="c r null" style="left:897px;top:678px;width:115px;height:22px;line-height:23px;">NULL</div>
<div class="c r null" style="left:1013px;top:678px;width:139px;height:22px;line-height:23px;">NULL</div>
<div class="c r null" style="left:1153px;top:678px;width:52px;height:22px;line-height:23px;">NULL</div>
<svg class="abs" style="left:0;top:0;pointer-events:none" width="1241" height="720" viewBox="0 0 1241 720">
<rect x="17" y="21" width="142" height="27" fill="none" stroke="#ff0000" stroke-width="2"/>
<rect x="548" y="538" width="264" height="29" fill="none" stroke="#ff0000" stroke-width="2"/>
<line x1="128.700" y1="60.400" x2="537" y2="535" stroke="#ff0000" stroke-width="2.200"/>
<polygon points="544,543 538.200,531.400 532.200,537" fill="#ff0000"/>
</svg>
</body></html>
